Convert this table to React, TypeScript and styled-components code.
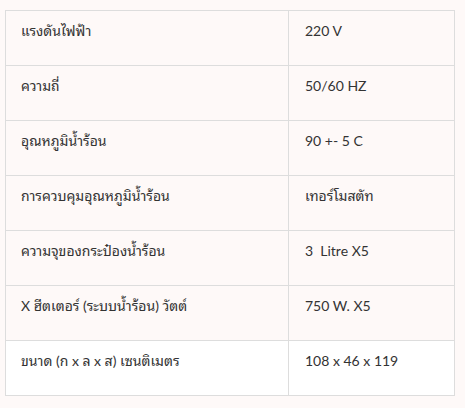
import React from "react";
import styled, { createGlobalStyle } from "styled-components";

const GlobalStyle = createGlobalStyle`
  html, body {
    margin: 0;
    padding: 0;
    background: #fef9f8;
  }
  body {
    font-family: Lato, "Noto Sans Thai Looped", Loma, Garuda, Tahoma, "Noto Sans", "Noto Sans Thai", sans-serif;
  }
`;

const Page = styled.div`
  padding: 10px 10px 0 5px;
`;

const SpecTable = styled.table`
  width: 450px;
  border-collapse: collapse;
  table-layout: fixed;
  border: 1px solid #dddddd;
`;

const Row = styled.tr<{ $white?: boolean }>`
  background: ${(p) => (p.$white ? "#ffffff" : "#fef9f8")};
`;

const Cell = styled.td<{ $first?: boolean }>`
  width: ${(p) => (p.$first ? "283px" : "auto")};
  height: 55px;
  box-sizing: border-box;
  border: 1px solid #dddddd;
  padding: 9px 15px 24px ${(p) => (p.$first ? "15px" : "16px")};
  vertical-align: top;
  font-size: 14px;
  line-height: 21px;
  color: #333333;
  white-space: pre;
`;

const specs: [string, string][] = [
  ["แรงดันไฟฟ้า", "220 V"],
  ["ความถี่", "50/60 HZ"],
  ["อุณหภูมิน้ำร้อน", "90 +- 5 C"],
  ["การควบคุมอุณหภูมิน้ำร้อน", "เทอร์โมสตัท"],
  ["ความจุของกระป๋องน้ำร้อน", "3  Litre X5"],
  ["X ฮีตเตอร์ (ระบบน้ำร้อน) วัตต์", "750 W. X5"],
  ["ขนาด (ก x ล x ส) เซนติเมตร", "108 x 46 x 119"],
];

export default function App() {
  return (
    <Page>
      <GlobalStyle />
      <SpecTable>
        <tbody>
          {specs.map(([label, value], i) => (
            <Row key={label} $white={i === specs.length - 1}>
              <Cell $first>{label}</Cell>
              <Cell>{value}</Cell>
            </Row>
          ))}
        </tbody>
      </SpecTable>
    </Page>
  );
}
